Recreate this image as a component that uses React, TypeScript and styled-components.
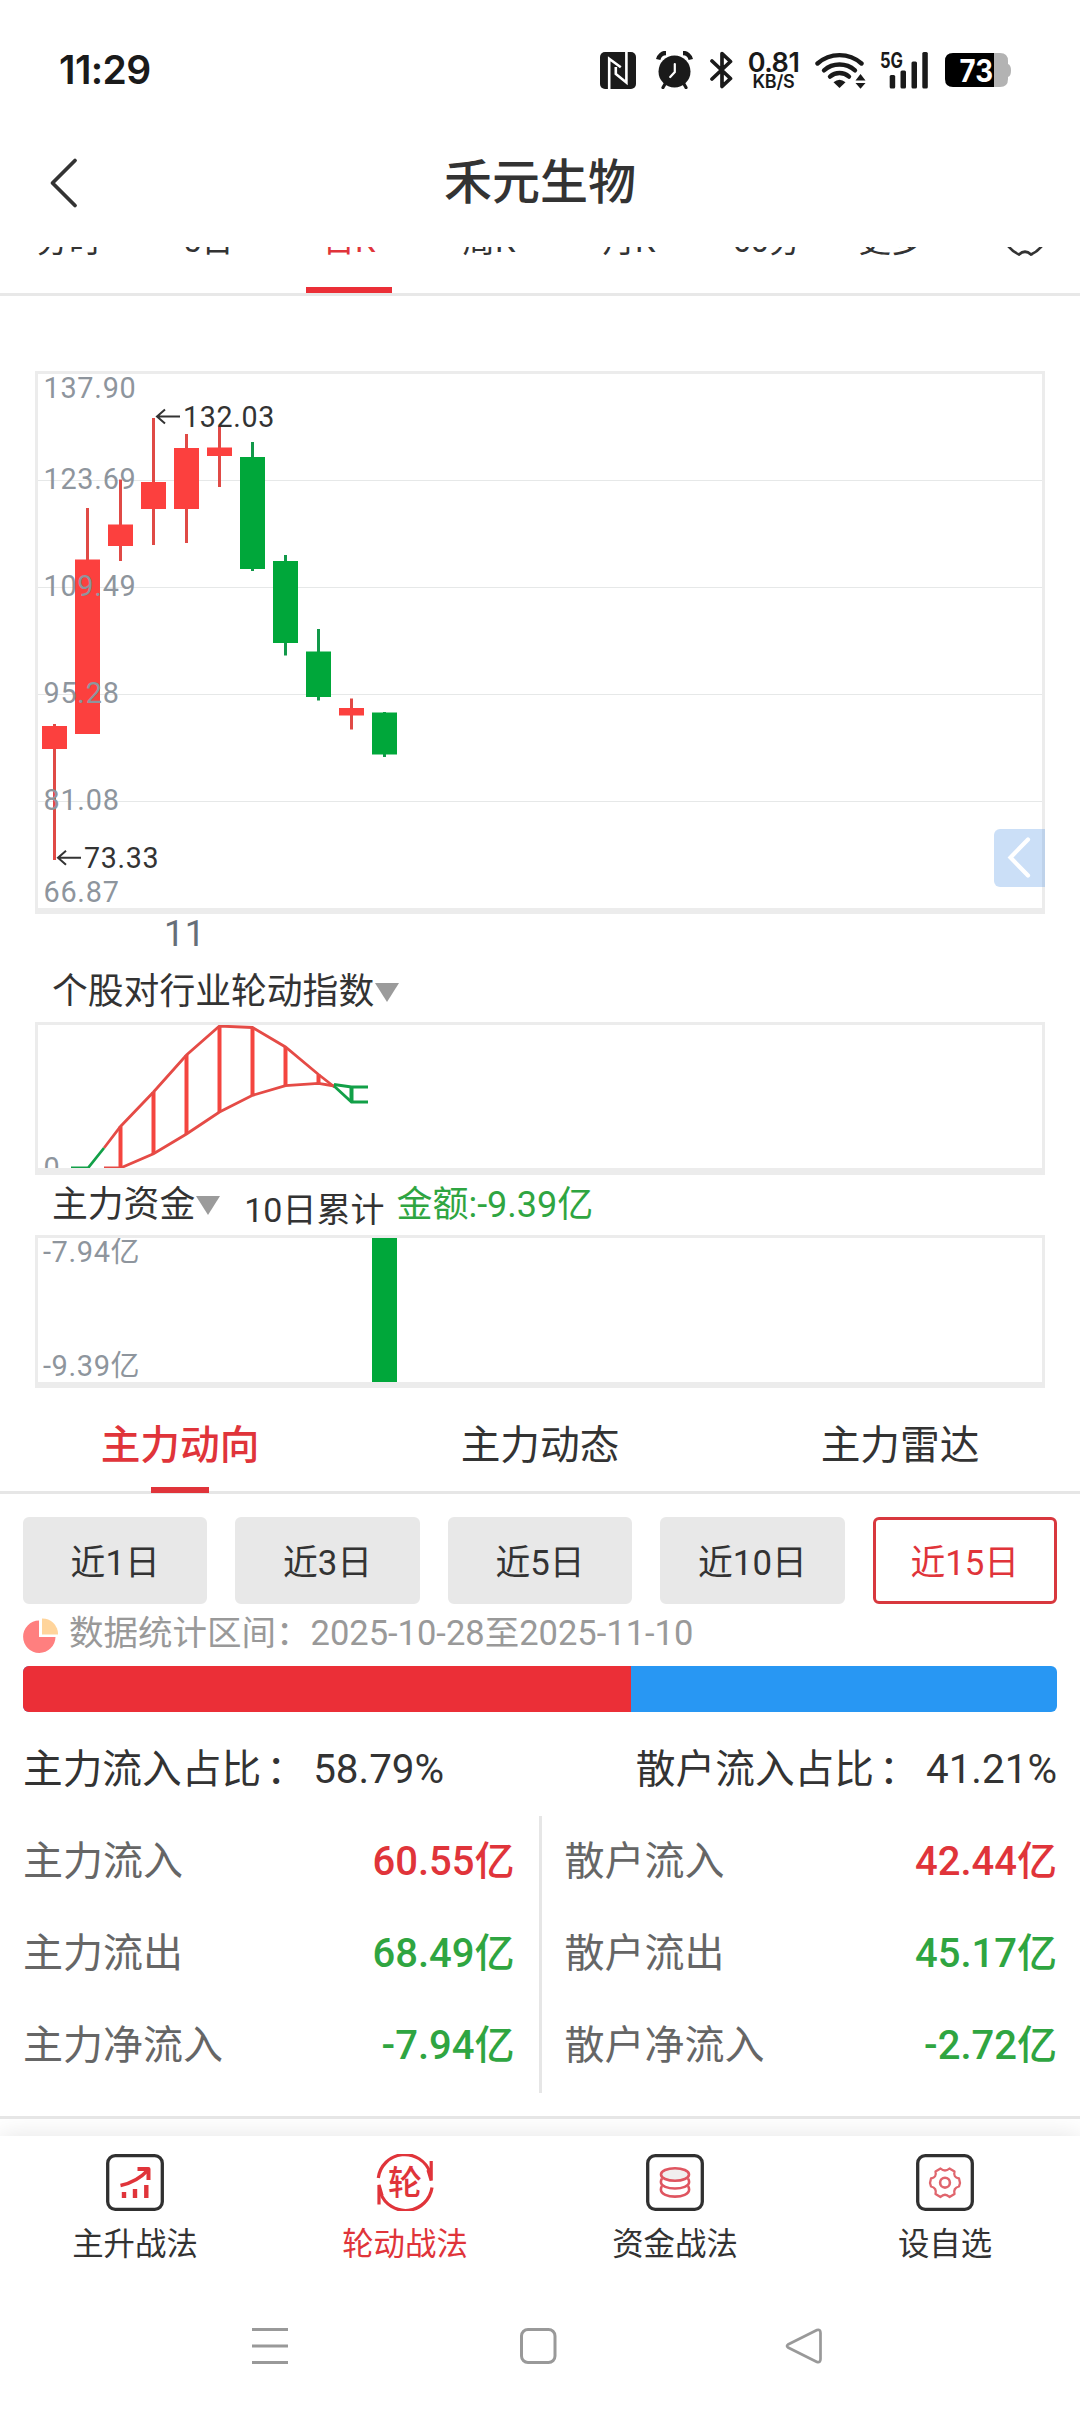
import React from "react";
import styled, { createGlobalStyle } from "styled-components";

const RED = "#e0343a";
const GREEN = "#2fa541";
const CANDLE_RED = "#fc403e";
const CANDLE_GREEN = "#00a73a";
const SANS = `Roboto, "Noto Sans CJK SC", sans-serif`;

const GlobalStyle = createGlobalStyle`
  html, body { margin: 0; padding: 0; background: #fff; }
  * { box-sizing: border-box; }
  svg { display: block; flex: none; }
`;

const Screen = styled.div`
  width: 1080px;
  height: 2412px;
  display: flex;
  flex-direction: column;
  overflow: hidden;
  background: #fff;
  color: #333;
  font-family: ${SANS};
`;

/* ---------- status bar ---------- */

const StatusBar = styled.header`
  height: 140px;
  flex: none;
  display: flex;
  align-items: center;
  justify-content: space-between;
  padding: 0 69px 0 59px;
  color: #1a1a1a;
`;

const Clock = styled.span`
  font: 600 39px/46px Inter, sans-serif;
  letter-spacing: -0.6px;
`;

const StatusIcons = styled.div`
  display: flex;
  align-items: center;
`;

const Slot = styled.div<{ $gap: number }>`
  margin-left: ${(p) => p.$gap}px;
`;

const Speed = styled.div`
  width: 53px;
  display: flex;
  flex-direction: column;
  align-items: center;
  white-space: nowrap;
`;

const SpeedValue = styled.span`
  font: 600 27px/23px Inter, sans-serif;
  letter-spacing: -0.5px;
`;

const SpeedUnit = styled.span`
  font: 600 18px/16px Inter, sans-serif;
  letter-spacing: -0.2px;
`;

/* ---------- title bar and period strip ---------- */

const TitleBar = styled.div`
  height: 107px;
  flex: none;
  display: grid;
  grid-template-columns: 110px 1fr 110px;
  align-items: center;
  padding-bottom: 21px;
`;

const BackButton = styled.button`
  border: 0;
  background: none;
  padding: 0 0 0 48px;
`;

const Title = styled.h1`
  margin: 0;
  text-align: center;
  font: 500 48px/60px ${SANS};
`;

const PeriodStrip = styled.nav`
  height: 49px;
  flex: none;
  overflow: hidden;
  border-bottom: 3px solid #e8e8e8;
`;

const PeriodRow = styled.div`
  display: grid;
  grid-template-columns: 138px 141px 140px 140px 140px 136px 135px 1fr;
  height: 96px;
  margin-top: -50px;
`;

const Period = styled.span<{ $active?: boolean }>`
  display: flex;
  flex-direction: column;
  justify-content: space-between;
  align-items: center;
  padding-top: 21px;
  font-size: 32.5px;
  line-height: 46px;
  color: ${(p) => (p.$active ? RED : "#333")};
  &::after {
    content: "";
    width: 86px;
    height: 6px;
    background: ${(p) => (p.$active ? "#eb2f37" : "transparent")};
  }
`;

const MoreLabel = styled.span`
  display: flex;
  align-items: center;
  gap: 9px;
`;

/* ---------- charts ---------- */

const Charts = styled.section`
  flex: none;
  padding: 75px 35px 0;
`;

const Frame = styled.div<{ $height: number; $bottom: number }>`
  position: relative;
  height: ${(p) => p.$height}px;
  border: 3px solid #ececec;
  border-bottom-width: ${(p) => p.$bottom}px;
`;

const Collapse = styled.button`
  position: absolute;
  right: -3px;
  bottom: 21px;
  width: 51px;
  height: 58px;
  padding: 0 0 0 11px;
  border: 0;
  border-radius: 6px 0 0 6px;
  background: rgba(82, 148, 228, 0.3);
`;

const AxisRow = styled.div`
  height: 48px;
  padding-left: 129px;
  color: #666e78;
  font-size: 36px;
  line-height: 40px;
  letter-spacing: 0.5px;
`;

const IndicatorRow = styled.div<{ $height: number }>`
  height: ${(p) => p.$height}px;
  display: flex;
  align-items: flex-start;
  padding: 2px 0 0 17px;
  white-space: nowrap;
`;

const IndicatorName = styled.span`
  display: flex;
  align-items: center;
  font-size: 35.8px;
  line-height: 56px;
`;

const Caret = styled.i`
  margin: 1px 0 0 1px;
  border: 12px solid transparent;
  border-top: 19px solid #9b9b9b;
  border-bottom: 0;
`;

const Cumulative = styled.span`
  margin: 5px 0 0 24px;
  font-size: 34px;
  line-height: 56px;
`;

const Amount = styled.span`
  margin-left: 12px;
  color: ${GREEN};
  font-size: 36px;
  line-height: 56px;
`;

/* ---------- capital flow panel ---------- */

const FlowTabs = styled.nav`
  height: 106px;
  flex: none;
  display: grid;
  grid-template-columns: repeat(3, 1fr);
  border-bottom: 3px solid #e6e6e6;
`;

const FlowTab = styled.span<{ $active?: boolean }>`
  height: 105px;
  display: flex;
  flex-direction: column;
  align-items: center;
  justify-content: space-between;
  padding-top: 28px;
  font-size: 39.7px;
  line-height: 60px;
  font-weight: ${(p) => (p.$active ? 500 : 400)};
  color: ${(p) => (p.$active ? RED : "#333")};
  &::after {
    content: "";
    width: 58px;
    height: 6px;
    background: ${(p) => (p.$active ? RED : "transparent")};
  }
`;

const FlowPanel = styled.section`
  height: 625px;
  flex: none;
  padding: 23px 23px 0;
  border-bottom: 3px solid #e6e6e6;
`;

const Ranges = styled.div`
  display: grid;
  grid-template-columns: repeat(5, 1fr);
  gap: 28px;
`;

const Range = styled.button<{ $active?: boolean }>`
  height: 87px;
  padding: 5px 0 0;
  border: 3px solid ${(p) => (p.$active ? "#d8383e" : "#e8e8e8")};
  border-radius: 6px;
  background: ${(p) => (p.$active ? "#fff" : "#e8e8e8")};
  color: ${(p) => (p.$active ? RED : "#333")};
  font: 400 34.8px/50px ${SANS};
`;

const Span = styled.div`
  height: 62px;
  display: flex;
  align-items: center;
  gap: 11px;
  color: #999;
  font-size: 34.5px;
  line-height: 50px;
`;

const SpanText = styled.span`
  margin-top: -4px;
`;

const RatioBar = styled.div`
  height: 46px;
  display: flex;
  border-radius: 6px;
  overflow: hidden;
  background: #2897f3;
`;

const RatioFill = styled.div`
  background: #eb2f37;
`;

const RatioText = styled.div`
  height: 104px;
  display: flex;
  justify-content: space-between;
  padding-top: 28px;
  font-size: 39.7px;
  line-height: 60px;
`;

const Ratio = styled.span`
  display: flex;
`;

const Colon = styled.span`
  width: 48px;
  padding-left: 5px;
  margin-right: 4px;
`;

const RatioValue = styled.span`
  font-size: 40.4px;
`;

const FlowGrid = styled.div`
  display: grid;
  grid-template-columns: 1fr 3px 1fr;
  height: 277px;
`;

const Divider = styled.div`
  background: #e6e6e6;
`;

const FlowColumn = styled.div<{ $side: "left" | "right" }>`
  display: grid;
  grid-template-rows: repeat(3, 92px);
  padding: ${(p) => (p.$side === "left" ? "0 24px 0 0" : "0 0 0 23px")};
`;

const FlowRow = styled.div`
  display: flex;
  justify-content: space-between;
  align-items: center;
  font-size: 40px;
  line-height: 60px;
  color: #666;
`;

const FlowValue = styled.span<{ $color: string }>`
  color: ${(p) => p.$color};
  font-weight: 500;
`;

/* ---------- bottom navigation ---------- */

const BottomNav = styled.nav`
  height: 144px;
  margin-top: 17px;
  flex: none;
  display: grid;
  grid-template-columns: repeat(4, 1fr);
  background: #fff;
  box-shadow: 0 0 24px rgba(0, 0, 0, 0.11);
  clip-path: inset(-17px 0 0 0);
`;

const NavItem = styled.span<{ $active?: boolean }>`
  display: flex;
  flex-direction: column;
  align-items: center;
  gap: 10px;
  padding-top: 18px;
  font-size: 31.4px;
  line-height: 48px;
  color: ${(p) => (p.$active ? RED : "#333")};
`;

const SystemNav = styled.footer`
  flex: 1;
  display: flex;
  justify-content: space-between;
  padding: 46px 257px 0 250px;
`;

/* ---------- data ---------- */

type Candle = { up: boolean; high: number; low: number; top: number; bottom: number };

const candles: Candle[] = [
  { up: true, high: 724, low: 860, top: 726, bottom: 749 },
  { up: true, high: 508, low: 734, top: 559.5, bottom: 734 },
  { up: true, high: 479.5, low: 561, top: 524.5, bottom: 546 },
  { up: true, high: 418, low: 545, top: 482, bottom: 509 },
  { up: true, high: 434, low: 543, top: 448, bottom: 509 },
  { up: true, high: 426, low: 487, top: 447.5, bottom: 456 },
  { up: false, high: 442, low: 571, top: 457, bottom: 569 },
  { up: false, high: 555, low: 655.5, top: 561, bottom: 643 },
  { up: false, high: 629, low: 700.5, top: 651.5, bottom: 697 },
  { up: true, high: 698.5, low: 729.5, top: 708, bottom: 715.5 },
  { up: false, high: 712, low: 757, top: 712.5, bottom: 754.5 },
];

const priceLabels: [string, number][] = [
  ["137.90", 398],
  ["123.69", 489],
  ["109.49", 596],
  ["95.28", 703],
  ["81.08", 809.5],
  ["66.87", 902],
];

const rungs: [number, number, number][] = [
  [120.5, 1126.5, 1168],
  [153.5, 1092, 1154],
  [186.5, 1055, 1134],
  [219.5, 1026, 1112],
  [252.5, 1027.5, 1095.5],
  [285.5, 1047, 1086],
  [318.5, 1074.5, 1083.5],
];

const periods = ["分时", "5日", "日K", "周K", "月K", "60分"];
const ranges = ["近1日", "近3日", "近5日", "近10日", "近15日"];

const mainFlow: [string, string, string][] = [
  ["主力流入", "60.55亿", RED],
  ["主力流出", "68.49亿", GREEN],
  ["主力净流入", "-7.94亿", GREEN],
];
const retailFlow: [string, string, string][] = [
  ["散户流入", "42.44亿", RED],
  ["散户流出", "45.17亿", GREEN],
  ["散户净流入", "-2.72亿", GREEN],
];

/* ---------- drawings ---------- */

const NfcIcon = () => (
  <svg width="36" height="37" viewBox="0 0 36 37">
    <rect width="36" height="37" rx="5" fill="#1a1a1a" />
    <path d="M9.200 37V6.800L20.800 15.300" fill="none" stroke="#fff" strokeWidth="2.600" />
    <path d="M26.400 0V30.500L15.800 22V15" fill="none" stroke="#fff" strokeWidth="2.600" />
  </svg>
);

const AlarmIcon = () => (
  <svg width="37" height="38" viewBox="0 0 37 38">
    <circle cx="18.500" cy="20.500" r="16" fill="#1a1a1a" />
    <path d="M2.200 8.500A8 8 0 0 1 10 2M27 2A8 8 0 0 1 34.800 8.500" fill="none" stroke="#1a1a1a" strokeWidth="4.500" />
    <path d="M9 33l-2 3.500M28 33l2 3.500" stroke="#1a1a1a" strokeWidth="3.200" strokeLinecap="round" />
    <path d="M18.800 13v8l-4.600 5" fill="none" stroke="#fff" strokeWidth="2.200" strokeLinecap="round" />
  </svg>
);

const BluetoothIcon = () => (
  <svg width="23" height="38" viewBox="0 0 23 38">
    <path
      d="M2 10L20.500 27.500L12 35.500V2.500L20.500 10.500L2 28"
      fill="none"
      stroke="#1a1a1a"
      strokeWidth="3.700"
      strokeLinejoin="round"
      strokeLinecap="round"
    />
  </svg>
);

const WifiIcon = () => (
  <svg width="51" height="37" viewBox="0 0 51 37">
    <g fill="none" stroke="#1a1a1a" strokeWidth="4.400" strokeLinecap="round">
      <path d="M2.500 11.500A33 33 0 0 1 46.500 11.500" />
      <path d="M9 18.300A23.500 23.500 0 0 1 40 18.300" />
      <path d="M15 24.600A14.500 14.500 0 0 1 34 24.600" />
    </g>
    <path d="M18.500 30.300Q24.500 25 30.500 30.300L24.500 36Z" fill="#1a1a1a" />
    <path d="M40.500 28.500l5-6.500 5 6.500zM40.500 31l5 5.800 5-5.800z" fill="#1a1a1a" />
  </svg>
);

const SignalIcon = () => (
  <svg width="49" height="38" viewBox="0 0 49 38" overflow="visible">
    <text x="0" y="16.500" textLength="23" lengthAdjust="spacingAndGlyphs" fontFamily="Inter, sans-serif" fontWeight="700" fontSize="21" fill="#1a1a1a">
      5G
    </text>
    <g fill="#1a1a1a">
      <rect x="9.700" y="24" width="5.500" height="13.500" rx="1.500" />
      <rect x="20.500" y="19.500" width="5.500" height="18" rx="1.500" />
      <rect x="31.500" y="10.500" width="5.500" height="27" rx="1.500" />
      <rect x="42.300" y="1" width="5.500" height="36.500" rx="1.500" />
    </g>
  </svg>
);

const BatteryIcon = () => (
  <svg width="66" height="35" viewBox="0 0 66 35">
    <path d="M49 0h6q8 0 8 8v3q3 1 3 6.500t-3 6.500v2q0 8-8 8h-6z" fill="#b3b3b3" />
    <path d="M49 0H8Q0 0 0 8v18q0 8 8 8h41z" fill="#000" />
    <text x="14.500" y="28.800" textLength="33.500" lengthAdjust="spacingAndGlyphs" fontFamily="Inter, sans-serif" fontWeight="700" fontSize="31" fill="#fff">
      73
    </text>
  </svg>
);

const Callout = ({ x, y, label }: { x: number; y: number; label: string }) => (
  <g>
    <path d={`M${x + 24} ${y}H${x + 1}M${x + 9} ${y - 7}L${x + 1} ${y}L${x + 9} ${y + 7}`} fill="none" stroke="#333" strokeWidth="2" />
    <text x={x + 27} y={y + 10.2} fontSize="28.600" letterSpacing="0.700" fill="#333">
      {label}
    </text>
  </g>
);

const CandleChart = () => (
  <svg width="1004" height="534" viewBox="38 374 1004 534" fontFamily={SANS}>
    {[480, 587, 694, 801].map((y) => (
      <rect key={y} x="38" y={y} width="1004" height="1" fill="#e6e8e8" />
    ))}
    {candles.map((c, i) => (
      <g key={i} fill={c.up ? CANDLE_RED : CANDLE_GREEN}>
        <rect x={53 + i * 33} y={c.high} width="3" height={c.low - c.high} fill={c.up ? "#e04a46" : "#12994a"} />
        <rect x={42 + i * 33} y={c.top} width="25" height={c.bottom - c.top} />
      </g>
    ))}
    {priceLabels.map(([label, y]) => (
      <text key={label} x="43.500" y={y} fontSize="28.800" letterSpacing="0.750" fill="#8e959d">
        {label}
      </text>
    ))}
    <Callout x={156} y={416.5} label="132.03" />
    <Callout x={57} y={857.8} label="73.33" />
  </svg>
);

const RotationChart = () => (
  <svg width="1004" height="143" viewBox="38 1025 1004 143" fontFamily={SANS}>
    <text x="43.500" y="1177.500" fontSize="28.800" fill="#8e959d">
      0
    </text>
    <g stroke="#f4453f" strokeWidth="4">
      {rungs.map(([x, top, bottom]) => (
        <line key={x} x1={x} x2={x} y1={top} y2={bottom} />
      ))}
    </g>
    <g fill="none" stroke="#e54b46" strokeWidth="2.800">
      <path d="M104 1148L120.500 1126.500L153.500 1092L186.500 1055L219.500 1026L252.500 1027.500L285.500 1047L318.500 1074.500L334.500 1087" />
      <path d="M104 1168H120.500L153.500 1153.700L186.500 1134L219.500 1112L252.500 1095.300L285.500 1085.700L318.500 1083.300L334.500 1086" />
    </g>
    <g fill="none" stroke="#12a048" strokeWidth="2.800">
      <path d="M71 1168H88L104 1148" />
      <path d="M334 1084.500L351.500 1087H368" />
      <path d="M334 1086L351.500 1102H368" />
      <path d="M351.500 1087V1102" strokeWidth="4" />
    </g>
  </svg>
);

const CapitalChart = () => (
  <svg width="1004" height="144" viewBox="38 1238 1004 144" fontFamily={SANS}>
    <rect x="372" y="1238" width="25" height="144" fill={CANDLE_GREEN} />
    <g fontSize="29" letterSpacing="0.600" fill="#8e959d">
      <text x="43" y="1261.800">-7.94亿</text>
      <text x="43" y="1375.800">-9.39亿</text>
    </g>
  </svg>
);

const PieIcon = () => (
  <svg width="35" height="35" viewBox="0 0 35 35">
    <path d="M16 2.500A16.200 16.200 0 1 0 32.500 19H16Z" fill="#ff7f7f" />
    <path d="M19 0.500A15.500 15.500 0 0 1 35 16.500H19Z" fill="#ffd49b" />
  </svg>
);

const BoxedIcon = ({ children }: { children: React.ReactNode }) => (
  <svg width="58" height="57" viewBox="0 0 58 57" fill="none">
    <rect x="1.700" y="1.700" width="54.600" height="53.600" rx="7.500" stroke="#303030" strokeWidth="3.300" />
    {children}
  </svg>
);

const TrendIcon = () => (
  <BoxedIcon>
    <g stroke={RED}>
      <path d="M14.500 31.500Q31 28 42 16" strokeWidth="3.400" />
      <path d="M31.500 15h11v11" strokeWidth="4" strokeLinejoin="round" />
      <path d="M36 15h8v8z" fill={RED} stroke="none" />
      <path d="M18 38v6M29 35v9M40.300 31v13" strokeWidth="4.400" />
    </g>
  </BoxedIcon>
);

const RotateIcon = () => (
  <svg width="58" height="57" viewBox="0 0 58 57" fill="none">
    <g stroke={RED} strokeWidth="3.200">
      <path d="M2.300 24A26.700 26.700 0 0 1 54 18.500" />
      <path d="M55.200 7V26.500L52 16" />
      <path d="M56 33.500A26.700 26.700 0 0 1 4.500 39" />
      <path d="M3 50.500V31L6 41.500" />
    </g>
    <text x="29" y="41" textAnchor="middle" fontFamily={SANS} fontWeight="500" fontSize="34" fill={RED}>
      轮
    </text>
  </svg>
);

const CoinsIcon = () => (
  <BoxedIcon>
    <g stroke="#df5560" strokeWidth="2.600">
      <ellipse cx="29" cy="20.500" rx="14" ry="6.300" fill="#f1eeee" />
      <path d="M16 24.500Q14.900 26 14.900 28C14.900 36.600 43.100 36.600 43.100 28Q43.100 26 42 24.500" />
      <path d="M16 32Q14.900 33.500 14.900 35.500C14.900 45 43.100 45 43.100 35.500Q43.100 33.500 42 32" />
    </g>
  </BoxedIcon>
);

const GearIcon = () => (
  <BoxedIcon>
    <g stroke="#e0656d" strokeWidth="2.300" strokeLinejoin="round">
      <path d="M24.500 14.500Q29 18.500 33.500 14.500L38.500 17.500Q37 23.500 43 24.500L44 29L43 32.500Q37 34 38.500 40L33.500 43Q29 38.500 24.500 43L19.500 40Q21 34 15 32.500L14 29L15 24.500Q21 23.500 19.500 17.500Z" />
      <circle cx="29" cy="28.700" r="4.900" strokeWidth="2.600" />
    </g>
  </BoxedIcon>
);

export default function App() {
  return (
    <Screen>
      <GlobalStyle />
      <StatusBar>
        <Clock>11:29</Clock>
        <StatusIcons>
          <NfcIcon />
          <Slot $gap={20}><AlarmIcon /></Slot>
          <Slot $gap={17}><BluetoothIcon /></Slot>
          <Slot $gap={14}>
            <Speed>
              <SpeedValue>0.81</SpeedValue>
              <SpeedUnit>KB/S</SpeedUnit>
            </Speed>
          </Slot>
          <Slot $gap={15}><WifiIcon /></Slot>
          <Slot $gap={14}><SignalIcon /></Slot>
          <Slot $gap={16}><BatteryIcon /></Slot>
        </StatusIcons>
      </StatusBar>

      <TitleBar>
        <BackButton>
          <svg width="30" height="52" viewBox="0 0 30 52">
            <path d="M27 3.500L4.500 26L27 48.500" fill="none" stroke="#333" strokeWidth="3.800" strokeLinecap="round" strokeLinejoin="round" />
          </svg>
        </BackButton>
        <Title>禾元生物</Title>
      </TitleBar>

      <PeriodStrip>
        <PeriodRow>
          {periods.map((p) => (
            <Period key={p} $active={p === "日K"}>{p}</Period>
          ))}
          <Period>
            <MoreLabel>
              更多
              <svg width="14" height="10" viewBox="0 0 14 10">
                <path d="M0 0h14L7 9z" fill="#999" />
              </svg>
            </MoreLabel>
          </Period>
          <Period>
            <svg width="38" height="38" viewBox="0 0 38 38">
              <path
                d="M13 2Q19 6 25 2L35 9Q31 19 35 29Q31 34 25 36.500Q19 31 13 36.500Q7 34 3 29Q7 19 3 9Z"
                fill="none"
                stroke="#333"
                strokeWidth="2.800"
              />
              <circle cx="19" cy="19" r="6" fill="none" stroke="#333" strokeWidth="2.800" />
            </svg>
          </Period>
        </PeriodRow>
      </PeriodStrip>

      <Charts>
        <Frame $height={543} $bottom={6}>
          <CandleChart />
          <Collapse>
            <svg width="28" height="44" viewBox="0 0 28 44">
              <path d="M23 3.500L5.500 21.500L23 39.500" fill="none" stroke="#fff" strokeWidth="4.200" strokeLinecap="round" />
            </svg>
          </Collapse>
        </Frame>
        <AxisRow>11</AxisRow>
        <IndicatorRow $height={60}>
          <IndicatorName>
            个股对行业轮动指数
            <Caret />
          </IndicatorName>
        </IndicatorRow>
        <Frame $height={153} $bottom={7}>
          <RotationChart />
        </Frame>
        <IndicatorRow $height={60}>
          <IndicatorName>
            主力资金
            <Caret />
          </IndicatorName>
          <Cumulative>10日累计</Cumulative>
          <Amount>金额:-9.39亿</Amount>
        </IndicatorRow>
        <Frame $height={153} $bottom={6}>
          <CapitalChart />
        </Frame>
      </Charts>

      <FlowTabs>
        <FlowTab $active>主力动向</FlowTab>
        <FlowTab>主力动态</FlowTab>
        <FlowTab>主力雷达</FlowTab>
      </FlowTabs>

      <FlowPanel>
        <Ranges>
          {ranges.map((r) => (
            <Range key={r} $active={r === "近15日"}>{r}</Range>
          ))}
        </Ranges>
        <Span>
          <PieIcon />
          <SpanText>数据统计区间：2025-10-28至2025-11-10</SpanText>
        </Span>
        <RatioBar>
          <RatioFill style={{ width: "58.79%" }} />
        </RatioBar>
        <RatioText>
          <Ratio>
            主力流入占比<Colon>：</Colon>
            <RatioValue>58.79%</RatioValue>
          </Ratio>
          <Ratio>
            散户流入占比<Colon>：</Colon>
            <RatioValue>41.21%</RatioValue>
          </Ratio>
        </RatioText>
        <FlowGrid>
          <FlowColumn $side="left">
            {mainFlow.map(([label, value, color]) => (
              <FlowRow key={label}>
                {label}
                <FlowValue $color={color}>{value}</FlowValue>
              </FlowRow>
            ))}
          </FlowColumn>
          <Divider />
          <FlowColumn $side="right">
            {retailFlow.map(([label, value, color]) => (
              <FlowRow key={label}>
                {label}
                <FlowValue $color={color}>{value}</FlowValue>
              </FlowRow>
            ))}
          </FlowColumn>
        </FlowGrid>
      </FlowPanel>

      <BottomNav>
        <NavItem><TrendIcon />主升战法</NavItem>
        <NavItem $active><RotateIcon />轮动战法</NavItem>
        <NavItem><CoinsIcon />资金战法</NavItem>
        <NavItem><GearIcon />设自选</NavItem>
      </BottomNav>

      <SystemNav>
        <svg width="40" height="40" viewBox="0 0 40 40">
          <path d="M2 3.500h36M2 20h36M2 36.500h36" stroke="#999" strokeWidth="3" />
        </svg>
        <svg width="40" height="40" viewBox="0 0 40 40">
          <rect x="4.500" y="3.500" width="33.500" height="33" rx="6.500" fill="none" stroke="#999" strokeWidth="3" />
        </svg>
        <svg width="40" height="40" viewBox="0 0 40 40">
          <path d="M34 4L5 18.500Q3 20 5 21.500L34 36Q37.500 37 37.500 33V7Q37.500 3 34 4Z" fill="none" stroke="#999" strokeWidth="2.700" strokeLinejoin="round" />
        </svg>
      </SystemNav>
    </Screen>
  );
}
